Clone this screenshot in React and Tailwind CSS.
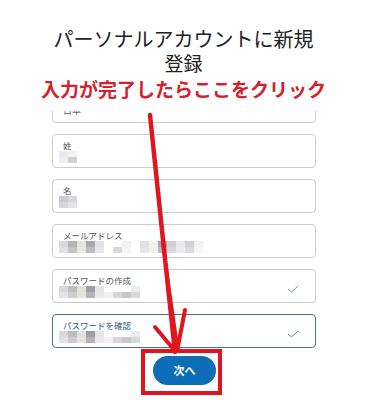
const blocks = {
  sei: [
    ["#e9e9ec", "#f2f2f4", "#ffffff"],
    ["#eeeef0", "#d0d0d4", "#ffffff"],
  ],
  mei: [["#c9c9cf", "#d8d8dc"], ["#d6d6da", "#e2e2e6"]],
  mail: [
    ["#d8d8dc", "#b4b4b8", "#e4e4e0", "#a8a8ac", "#e2e2e6", "#ffffff", "#ffffff", "#f2f2f2", "#ffffff", "#e0e0e4", "#f0f0ee", "#a8a8ac", "#cfcfd3", "#e8e8ec", "#d2d2d6", "#f2f2f4"],
    ["#e2e2e6", "#c4c4c8", "#e8e8e4", "#bcbcc0", "#e8e8ec", "#ffffff", "#d8d8d8", "#f4f4f4", "#ffffff", "#e6e6ea", "#f0f0ee", "#bcbcc0", "#d8d8dc", "#ececf0", "#dcdce0", "#f6f6f8"],
  ],
  pass: [
    ["#d8d8dc", "#bdbdc1", "#e0e0dc", "#a0a0a4", "#e6e6ea", "#ffffff", "#ffffff", "#ffffff", "#ededef"],
    ["#e2e2e6", "#cdcdd1", "#e4e4e0", "#b4b4b8", "#e8e8ec", "#f0f0f2", "#d6d6d8", "#c8c8cc", "#d8d8dc"],
  ],
};

function Mosaic({ rows }) {
  return (
    <div className="flex flex-col">
      {rows.map((row, i) => (
        <div key={i} className="flex">
          {row.map((c, j) => (
            <div key={j} className="w-[9px] h-[6px]" style={{ backgroundColor: c }} />
          ))}
        </div>
      ))}
    </div>
  );
}

function Check() {
  return (
    <svg width="12" height="8" viewBox="0 0 12 8" className="shrink-0">
      <path d="M1 4 L4.5 7 L11 1" fill="none" stroke="#6f9a80" strokeWidth="1" />
    </svg>
  );
}

function Field({ label, rows, check, active }) {
  return (
    <div
      className={`h-[34px] rounded-[4px] border flex items-center pl-[6px] pr-[16px] ${
        active ? "border-[#4b7187]" : "border-[#cbcbcb]"
      }`}
    >
      <div className="flex-1 flex flex-col">
        <div className={`text-[8.5px] leading-[11px] pl-[4px] ${active ? "text-[#2d5d88]" : "text-[#555]"}`}>{label}</div>
        <Mosaic rows={rows} />
      </div>
      {check && (
        <div className="pt-[6px]">
          <Check />
        </div>
      )}
    </div>
  );
}

export default function App() {
  return (
    <div
      className="relative w-[367px] h-[400px] bg-white overflow-hidden"
      style={{ fontFamily: '"Noto Sans CJK JP", "Noto Sans", sans-serif' }}
    >
      <div className="pt-[27px] text-center text-[20px] leading-[24px] text-[#222]">
        <div>パーソナルアカウントに新規</div>
        <div className="text-[19px]">登録</div>
      </div>
      <div className="mt-[3px] text-center text-[19px] leading-[22px] font-bold text-[#d3222b]">
        入力が完了したらここをクリック
      </div>

      <div className="ml-[52px] w-[264px] mt-[11px] flex flex-col gap-[11px]">
        <div className="h-[12px] overflow-hidden">
          <div className="-mt-[22px] h-[34px] rounded-[4px] border border-[#cbcbcb] pl-[10px] pt-[16px] text-[9px] leading-[10px] text-[#555]">
            日本
          </div>
        </div>
        <Field label="姓" rows={blocks.sei} />
        <Field label="名" rows={blocks.mei} />
        <Field label="メールアドレス" rows={blocks.mail} />
        <Field label="パスワードの作成" rows={blocks.pass} check />
        <Field label="パスワードを確認" rows={blocks.pass} check active />
      </div>

      <div className="ml-[141px] mt-[1px] w-[81px] h-[46px] border-[4px] border-[#e0141e] pt-[3px] pl-[8px]">
        <button className="w-[63px] h-[29px] rounded-full bg-[#0d6db6] text-white text-[11px] font-bold flex items-center justify-center">
          次へ
        </button>
      </div>

      <svg className="absolute inset-0 pointer-events-none" width="367" height="400" viewBox="0 0 367 400">
        <g stroke="#e0161f" strokeLinecap="round" fill="none">
          <path d="M150 115 L163 240 L175 352" strokeWidth="4.5" />
          <path d="M163 245 L178 350" strokeWidth="3" />
          <path d="M155 327 L175 351" strokeWidth="4" />
          <path d="M185 310 L177 351" strokeWidth="4" />
        </g>
      </svg>
    </div>
  );
}
